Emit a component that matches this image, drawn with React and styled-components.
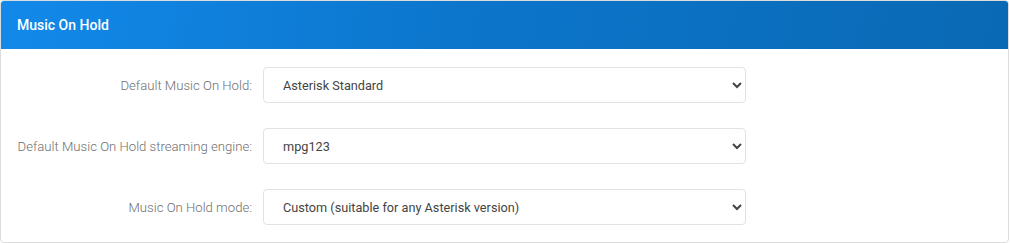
import React from "react";
import styled, { createGlobalStyle } from "styled-components";

const GlobalStyle = createGlobalStyle`
  body {
    margin: 0;
    background: #fff;
    font-family: Roboto, "Liberation Sans", sans-serif;
  }
`;

const Card = styled.div`
  width: 1009px;
  height: 243px;
  box-sizing: border-box;
  border: 1px solid #dcdcdc;
  border-radius: 4px;
  overflow: hidden;
  background: #fff;
`;

const Header = styled.div`
  height: 48px;
  display: flex;
  align-items: center;
  padding: 0 16px;
  background: linear-gradient(100deg, #1289ea 0%, #0c76cc 45%, #0a69b4 100%);
  color: #fff;
  font-size: 14px;
  font-weight: 500;
`;

const Body = styled.div`
  display: flex;
  flex-direction: column;
  gap: 25px;
  padding: 18px 0 16px;
`;

const Row = styled.div`
  display: grid;
  grid-template-columns: 251px 483px;
  column-gap: 11px;
  align-items: center;
`;

const Label = styled.label`
  text-align: right;
  font-size: 13.15px;
  font-weight: 300;
  color: #6f6f6f;
`;

const Select = styled.select`
  height: 36px;
  box-sizing: border-box;
  border: 1px solid #e2e2e2;
  border-radius: 4px;
  background: #fff;
  padding: 0 8px 0 15px;
  font-family: Roboto, "Liberation Sans", sans-serif;
  font-size: 12.7px;
  font-weight: 400;
  color: #444;
  outline: none;
`;

const fields = [
  { label: "Default Music On Hold:", value: "Asterisk Standard" },
  { label: "Default Music On Hold streaming engine:", value: "mpg123" },
  { label: "Music On Hold mode:", value: "Custom (suitable for any Asterisk version)" },
];

export default function App() {
  return (
    <>
      <GlobalStyle />
      <Card>
        <Header>Music On Hold</Header>
        <Body>
          {fields.map((f) => (
            <Row key={f.label}>
              <Label>{f.label}</Label>
              <Select defaultValue={f.value}>
                <option>{f.value}</option>
              </Select>
            </Row>
          ))}
        </Body>
      </Card>
    </>
  );
}
